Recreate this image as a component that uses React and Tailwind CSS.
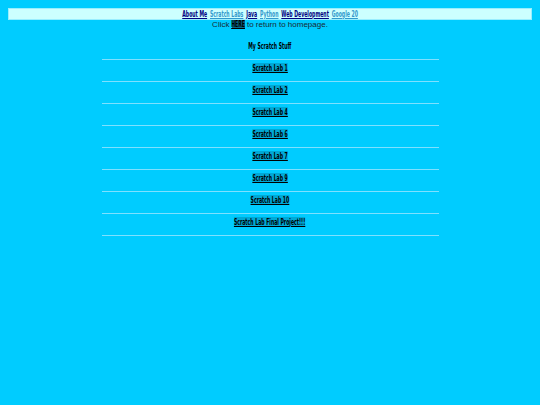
import React from 'react';

const impact = "font-['Impact','Liberation_Sans_Narrow','DejaVu_Sans_Condensed',sans-serif] font-bold";

const labs = [
    'Scratch Lab 1',
    'Scratch Lab 2',
    'Scratch Lab 4',
    'Scratch Lab 6',
    'Scratch Lab 7',
    'Scratch Lab 9',
    'Scratch Lab 10',
    'Scratch Lab Final Project!!!',
];

const nav = [
    { label: 'About Me', dark: true },
    { label: 'Scratch Labs', dark: false },
    { label: 'Java', dark: true },
    { label: 'Python', dark: false },
    { label: 'Web Development', dark: true },
    { label: 'Google 20', dark: false },
];

// no Impact here, so squeeze the condensed face to its width
const squeeze = 'inline-block scale-x-[0.57] origin-center whitespace-nowrap';

export default function App() {
    return (
        <div className="min-h-[405px] w-[540px] bg-[#00ccff] p-2">
            {/* top nav */}
            <div className={`flex h-[12px] items-center justify-center border border-[#99eeff] bg-[#ccffff] text-[9px] leading-none ${impact}`}>
                <span className={squeeze}>
                    {nav.map((n, i) => (
                        <React.Fragment key={n.label}>
                            {i > 0 && <span className="inline-block w-[5px]" />}
                            <a
                                href="#"
                                className={`underline ${n.dark ? 'text-[#000080]' : 'text-[#3399cc]'}`}
                            >
                                {n.label}
                            </a>
                        </React.Fragment>
                    ))}
                </span>
            </div>

            <p className="text-center font-['Liberation_Sans',Arial,sans-serif] text-[8px] leading-[9px] text-[#1a2a33]">
                Click{' '}
                <a
                    href="#"
                    className={`inline-flex h-[9px] w-[13px] justify-center overflow-visible bg-[#0a6a88] align-top text-black underline ${impact} text-[9px] leading-[9px]`}
                >
                    <span className={squeeze}>HERE</span>
                </a>{' '}
                to return to homepage.
            </p>

            <div className="mt-[12px] flex flex-col items-center">
                <div className={`text-[9px] leading-[10px] text-black ${impact} ${squeeze}`}>My Scratch Stuff</div>
                <hr className="mt-[8px] w-[337px] border-0 border-t border-[#7fe0ff]" />
                {labs.map((l) => (
                    <React.Fragment key={l}>
                        <a
                            href="#"
                            className={`mt-[3px] bg-[#00a9d6] text-[9px] leading-[10px] text-black underline ${impact} ${squeeze}`}
                        >
                            {l}
                        </a>
                        <hr className="mt-[8px] w-[337px] border-0 border-t border-[#7fe0ff]" />
                    </React.Fragment>
                ))}
            </div>
        </div>
    );
}
